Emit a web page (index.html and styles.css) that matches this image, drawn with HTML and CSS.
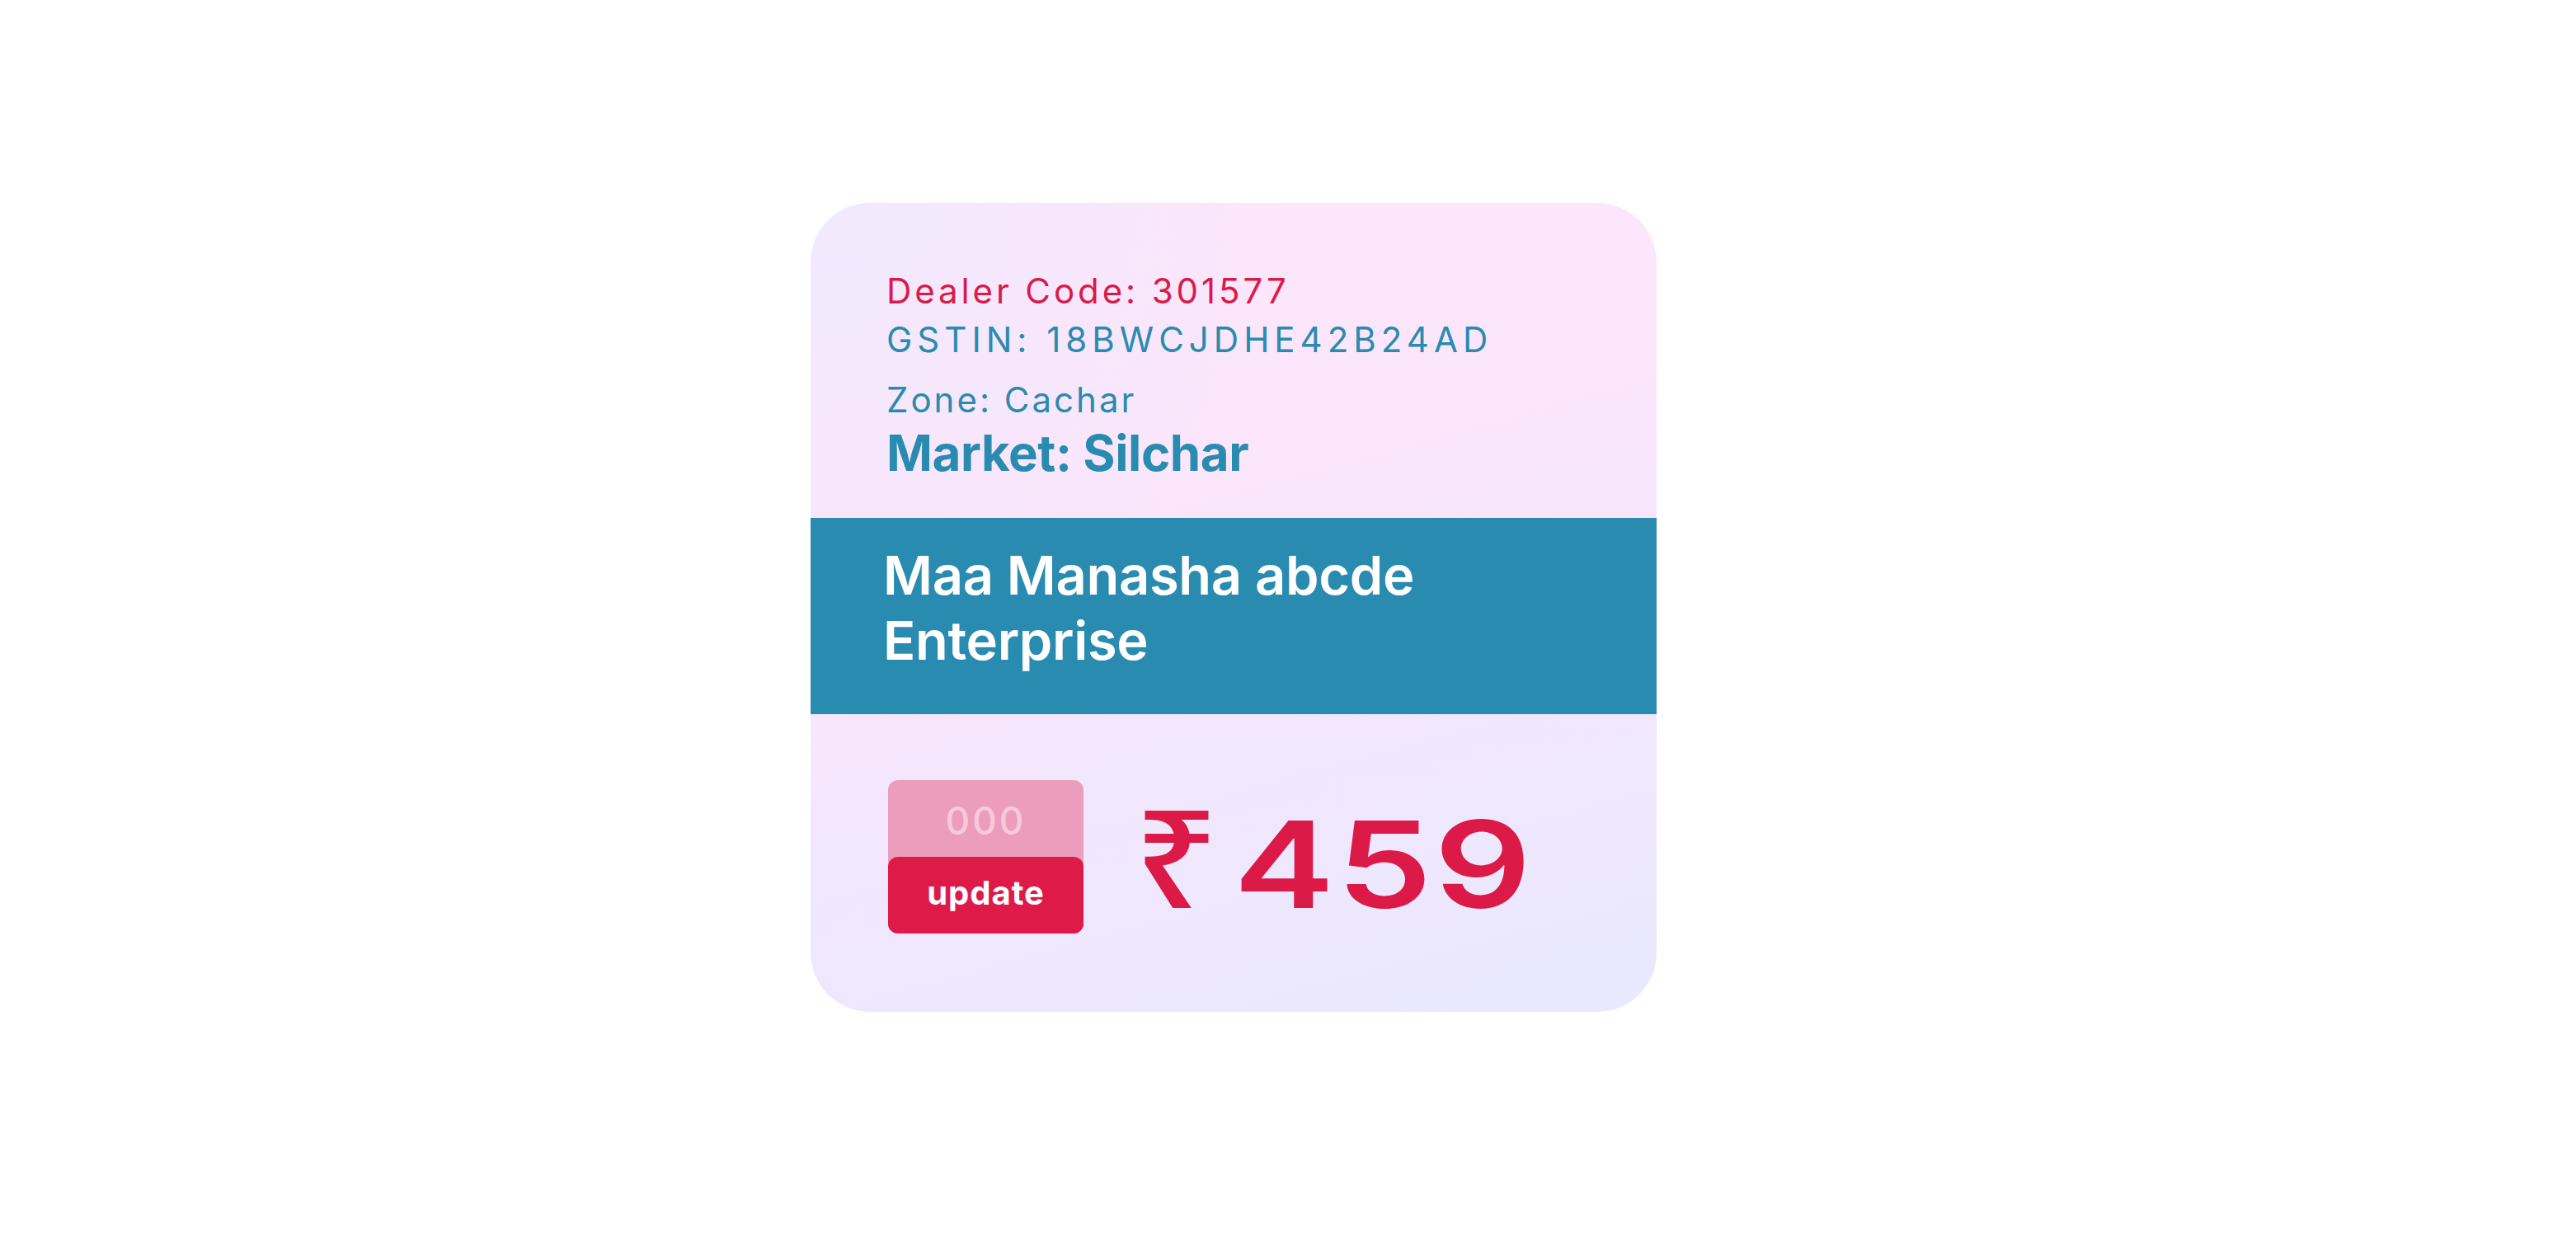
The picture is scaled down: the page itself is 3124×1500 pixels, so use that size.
FILE: index.html
```html
<!DOCTYPE html>
<html lang="en">
<head>
<meta charset="utf-8">
<title>Dealer Card</title>
<link rel="stylesheet" href="styles.css">
</head>
<body>
<div class="card">
  <div class="info">
    <p class="line code">Dealer Code: 301577</p>
    <p class="line gstin">GSTIN: 18BWCJDHE42B24AD</p>
    <p class="line zone">Zone: Cachar</p>
    <p class="market">Market: Silchar</p>
  </div>
  <div class="band">
    <h2 class="dealer-name">Maa Manasha abcde Enterprise</h2>
  </div>
  <div class="bottom">
    <div class="qty-box">
      <div class="qty">000</div>
      <button class="update" type="button">update</button>
    </div>
    <div class="price"><span class="rupee">₹</span><span class="amount">459</span></div>
  </div>
</div>
</body>
</html>
```
FILE: styles.css
```css
html, body {
  margin: 0;
  background: #ffffff;
}
body {
  padding: 246px 0 0 983px;
  font-family: "Inter", "Liberation Sans", sans-serif;
}
.card {
  width: 1026px;
  height: 981px;
  border-radius: 72px;
  overflow: hidden;
  background:
    radial-gradient(ellipse at 0% 0%, rgba(240, 233, 253, 0.9) 0%, rgba(240, 233, 253, 0) 40%),
    linear-gradient(165deg, #fde6fc 0%, #fbe6fc 38%, #f1e7fd 68%, #e8e8fe 100%);
  display: flex;
  flex-direction: column;
}
.info {
  box-sizing: border-box;
  height: 382px;
  padding: 77px 93px 0 92px;
}
.info p {
  margin: 0;
}
.line {
  font-size: 42px;
  line-height: 59px;
  font-weight: 400;
  letter-spacing: 3.9px;
  color: #2a8bb0;
}
.info .code {
  color: #dc1a48;
}
.info .gstin {
  letter-spacing: 6px;
}
.info .zone {
  margin-top: 15px;
  line-height: 58px;
  letter-spacing: 3px;
}
.info .market {
  margin-top: 3px;
  font-size: 60px;
  line-height: 64px;
  font-weight: 700;
  letter-spacing: -0.4px;
  color: #2a8bb0;
}
.band {
  box-sizing: border-box;
  height: 238px;
  background: #2a8bb0;
  padding: 30px 140px 0 88px;
}
.dealer-name {
  margin: 0;
  color: #ffffff;
  font-size: 65px;
  line-height: 79px;
  font-weight: 600;
  letter-spacing: -0.3px;
}
.bottom {
  flex: 1;
  display: flex;
  align-items: flex-start;
  padding: 80px 0 0 94px;
}
.qty-box {
  width: 237px;
  height: 186px;
  border-radius: 12px;
  background: #ec9dbb;
  display: flex;
  flex-direction: column;
}
.qty {
  height: 93px;
  display: flex;
  align-items: center;
  justify-content: center;
  font-size: 46px;
  letter-spacing: 3px;
  color: rgba(255, 232, 242, 0.62);
  font-weight: 500;
  padding-top: 4px;
  box-sizing: border-box;
}
.update {
  height: 93px;
  border: 0;
  border-radius: 12px;
  background: #dd1a48;
  color: #ffffff;
  font-family: "Inter", "Liberation Sans", sans-serif;
  font-size: 40px;
  font-weight: 700;
  letter-spacing: 1px;
  padding: 0 0 6px 0;
  margin: 0;
}
.price {
  margin: 18px 0 0 61px;
  display: flex;
  align-items: baseline;
  color: #dc1a48;
  line-height: 146px;
}
.rupee {
  display: inline-block;
  font-family: "Noto Sans", "DejaVu Sans", sans-serif;
  font-size: 166px;
  font-weight: 500;
  margin-right: 26px;
  transform: scaleX(1.09);
  transform-origin: left center;
}
.amount {
  display: inline-block;
  font-size: 146px;
  font-weight: 600;
  transform: scaleX(1.26);
  transform-origin: left center;
  letter-spacing: 2px;
}
```
